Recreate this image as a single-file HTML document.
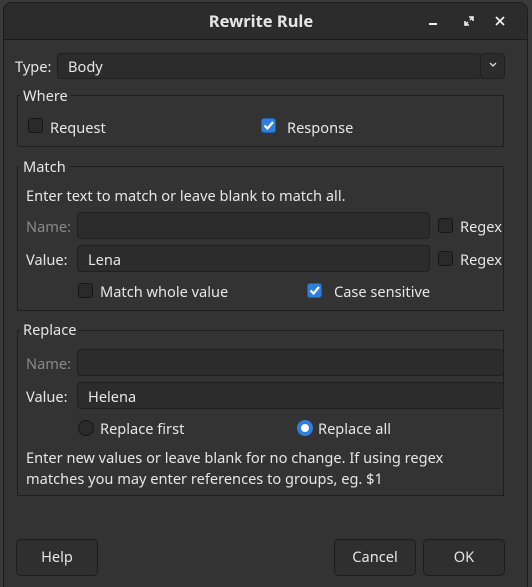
<!DOCTYPE html>
<html><head><style>
*{box-sizing:border-box;margin:0;padding:0}
html,body{width:532px;height:587px;overflow:hidden}
body{background:#3a3a3a;position:relative;font-family:"Noto Sans","Liberation Sans",sans-serif;font-size:14.6px;color:#e6e6e6}
.win{position:absolute;left:3px;top:2px;width:525px;height:586px;background:#333;border:1px solid #1c1c1c;border-bottom:none;border-radius:9px 9px 0 0;overflow:hidden}
.tb{position:absolute;height:37px;background:#2c2c2c;border-bottom:1px solid #1c1c1c}
.a{position:absolute;white-space:nowrap;line-height:18px}
.in{position:absolute;background:#2c2c2c;border:1px solid #1f1f1f;border-radius:4px}
.gb{position:absolute;border:1px solid #1f1f1f}
.gt{position:absolute;background:#333;padding:0 3px;line-height:16px}
.cb{position:absolute;width:15px;height:15px;border:1px solid #161616;border-radius:3px;background:#2a2a2a}
.cb.on{background:#2f7fde;border-color:#1d5fb0}
.rb{position:absolute;width:16px;height:16px;border:1px solid #161616;border-radius:50%;background:#2a2a2a}
.btn{position:absolute;height:37px;border:1px solid #1c1c1c;border-radius:5px;background:#2f2f2f;text-align:center;line-height:35px}
.dim{color:#8a8a8a}
</style></head><body>
<div class="win"></div>
<div class="tb" style="left:4px;top:3px;width:523px;border-radius:8px 8px 0 0"></div>
<div class="a" style="left:0;width:522px;text-align:center;top:12px;font-weight:bold;font-size:16.5px">Rewrite Rule</div>
<div style="position:absolute;left:429px;top:23px;width:8px;height:2px;background:#eee"></div>
<svg style="position:absolute;left:464px;top:16px" width="10" height="10"><path d="M1 5V9H5M9 5V1H5M1 9L4 6M9 1L6 4" stroke="#eee" stroke-width="1.6" fill="none"/></svg>
<svg style="position:absolute;left:495px;top:16px" width="10" height="10"><path d="M1 1L9 9M9 1L1 9" stroke="#eee" stroke-width="1.8"/></svg>

<div class="a" style="left:15px;top:58px">Type:</div>
<div class="in" style="left:57px;top:53px;width:424px;height:26px"></div>
<div class="a" style="left:68px;top:58px">Body</div>
<div class="in" style="left:480px;top:53px;width:25px;height:26px"></div>
<svg style="position:absolute;left:489px;top:62px" width="8" height="6"><path d="M1 1L4 4L7 1" stroke="#ddd" stroke-width="1.3" fill="none"/></svg>

<div class="gb" style="left:17px;top:95px;width:487px;height:52px"></div>
<div class="gt" style="left:20px;top:88px">Where</div>
<div class="cb" style="left:28px;top:118px"></div><div class="a" style="left:50px;top:119px">Request</div>
<div class="cb on" style="left:261px;top:118px"><svg width="13" height="13" style="position:absolute;left:0;top:0"><path d="M2.5 6.5L5.5 9.5L11 3" stroke="#fff" stroke-width="2.2" fill="none"/></svg></div><div class="a" style="left:287px;top:119px">Response</div>

<div class="gb" style="left:17px;top:166px;width:487px;height:145px"></div>
<div class="gt" style="left:20px;top:159px">Match</div>
<div class="a" style="left:26px;top:187px">Enter text to match or leave blank to match all.</div>
<div class="a dim" style="left:26px;top:218px">Name:</div>
<div class="in" style="left:77px;top:212px;width:353px;height:27px"></div>
<div class="cb" style="left:438px;top:218px"></div><div class="a" style="left:460px;top:218px">Regex</div>
<div class="a" style="left:26px;top:251px">Value:</div>
<div class="in" style="left:77px;top:245px;width:353px;height:27px"></div>
<div class="a" style="left:88px;top:251px">Lena</div>
<div class="cb" style="left:438px;top:251px"></div><div class="a" style="left:460px;top:251px">Regex</div>
<div class="cb" style="left:78px;top:283px"></div><div class="a" style="left:100px;top:283px">Match whole value</div>
<div class="cb on" style="left:307px;top:283px"><svg width="13" height="13" style="position:absolute;left:0;top:0"><path d="M2.5 6.5L5.5 9.5L11 3" stroke="#fff" stroke-width="2.2" fill="none"/></svg></div><div class="a" style="left:334px;top:283px">Case sensitive</div>

<div class="gb" style="left:17px;top:330px;width:487px;height:166px"></div>
<div class="gt" style="left:20px;top:322px">Replace</div>
<div class="a dim" style="left:26px;top:355px">Name:</div>
<div class="in" style="left:77px;top:349px;width:427px;height:27px"></div>
<div class="a" style="left:26px;top:388px">Value:</div>
<div class="in" style="left:77px;top:382px;width:427px;height:27px"></div>
<div class="a" style="left:88px;top:388px">Helena</div>
<div class="rb" style="left:78px;top:420px"></div><div class="a" style="left:100px;top:420px">Replace first</div>
<div class="rb" style="left:297px;top:420px;background:#fff;border:4px solid #2f7fde"></div><div class="a" style="left:318px;top:420px">Replace all</div>
<div class="a" style="left:26px;top:448px;line-height:21px">Enter new values or leave blank for no change. If using regex<br>matches you may enter references to groups, eg. $1</div>

<div class="btn" style="left:16px;top:539px;width:82px">Help</div>
<div class="btn" style="left:334px;top:539px;width:82px">Cancel</div>
<div class="btn" style="left:423px;top:539px;width:82px">OK</div>
</body></html>
